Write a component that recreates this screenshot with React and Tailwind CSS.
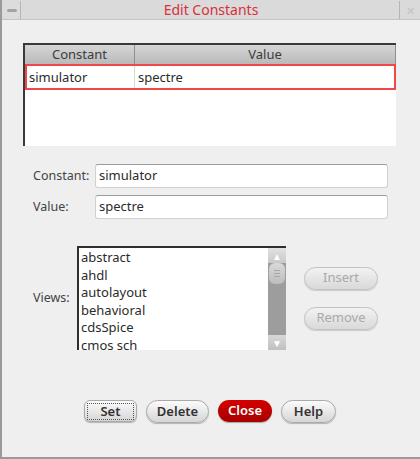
const VIEWS = ['abstract', 'ahdl', 'autolayout', 'behavioral', 'cdsSpice', 'cmos sch']

function PillButton({ children, className = '' }) {
  return (
    <button
      className={'h-[23px] rounded-full border border-[#a9a9a9] bg-gradient-to-b from-[#fbfbfb] to-[#d6d6d6] text-[13px] font-semibold text-[#333] shadow-[0_1px_1px_rgba(0,0,0,0.25)] ' + className}
    >
      {children}
    </button>
  )
}

export default function App() {
  return (
    <div className="w-[420px] h-[459px] flex flex-col bg-[#efefef] border-l-2 border-b-2 border-[#9a9a9a] font-['Noto_Sans',sans-serif] text-[#2b2b2b]">

      {/* title bar */}
      <div className="h-[20px] flex items-stretch bg-[#dadada] border-b border-[#c4c4c4] gap-[2px] pt-[1px]">
        <div className="w-[18px] ml-[1px] flex items-center justify-center bg-[#dcdcdc] border-r border-[#b5b5b5]">
          <div className="w-[10px] h-[3px] rounded-sm bg-[#a3a3a3]" />
        </div>
        <div className="flex-1 flex items-center justify-center border-r border-[#b5b5b5] text-[14px] text-[#d8303a] leading-none">
          Edit Constants
        </div>
        <div className="w-[17px] mr-[1px] flex items-center justify-center text-[11px] text-[#c2c2c2] leading-none">
          ✕
        </div>
      </div>

      {/* table */}
      <div className="ml-[21px] mt-[23px] w-[373px] h-[103px] flex flex-col bg-white border-l-2 border-t-2 border-[#3a3a3a]">
        <div className="h-[19px] flex bg-gradient-to-b from-[#d6d6d6] to-[#b9b9b9] text-[13px] text-[#3c3c3c] leading-none">
          <div className="w-[110px] flex items-center justify-center border-r border-[#8f8f8f]">Constant</div>
          <div className="flex-1 flex items-center justify-center border-r border-[#8f8f8f]">Value</div>
        </div>
        <div className="h-[26px] flex border-2 border-[#f04848] text-[13px] leading-none">
          <div className="w-[108px] flex items-center pl-[2px] border-r border-[#d8d8d8]">simulator</div>
          <div className="flex-1 flex items-center pl-[3px]">spectre</div>
        </div>
      </div>

      {/* fields */}
      <div className="mt-[18px] flex flex-col gap-[7px] text-[13px]">
        <div className="flex items-center">
          <span className="w-[62px] ml-[31px] text-[12.5px] text-[#444]">Constant:</span>
          <div className="w-[293px] h-[24px] flex items-center pl-[3px] bg-white rounded-[3px] border border-[#d0d0d0] border-t-[#9c9c9c]">simulator</div>
        </div>
        <div className="flex items-center">
          <span className="w-[62px] ml-[31px] text-[12.5px] text-[#444]">Value:</span>
          <div className="w-[293px] h-[24px] flex items-center pl-[3px] bg-white rounded-[3px] border border-[#d0d0d0] border-t-[#9c9c9c]">spectre</div>
        </div>
      </div>

      {/* views */}
      <div className="mt-[27px] flex items-center">
        <span className="w-[44px] ml-[31px] text-[12.5px] text-[#444]">Views:</span>
        <div className="w-[209px] h-[104px] flex bg-white border-l-2 border-t-2 border-[#2e2e2e] overflow-hidden">
          <div className="flex-1 flex flex-col pl-[2px] pt-[1px] text-[13px] leading-[17.5px]">
            {VIEWS.map(v => <span key={v}>{v}</span>)}
          </div>
          <div className="w-[18px] flex flex-col bg-[#9d9d9d]">
            <div className="h-[15px] flex items-center justify-center bg-gradient-to-b from-[#e2e2e2] to-[#c9c9c9] text-[10px] text-white leading-none">▲</div>
            <div className="mx-[1px] h-[21px] rounded-[6px] bg-gradient-to-b from-[#d9d9d9] to-[#bdbdbd] flex flex-col items-center justify-center gap-[2px]">
              <div className="w-[6px] h-[1px] bg-[#a8a8a8]" />
              <div className="w-[6px] h-[1px] bg-[#a8a8a8]" />
              <div className="w-[6px] h-[1px] bg-[#a8a8a8]" />
            </div>
            <div className="flex-1" />
            <div className="h-[15px] flex items-center justify-center bg-gradient-to-b from-[#d8d8d8] to-[#c0c0c0] text-[10px] text-white leading-none">▼</div>
          </div>
        </div>
        <div className="ml-[18px] flex flex-col gap-[17px]">
          <button className="w-[74px] h-[23px] rounded-full border border-[#c2c2c2] bg-gradient-to-b from-[#f2f2f2] to-[#d9d9d9] text-[13px] text-[#a9a9a9] shadow-[0_1px_1px_rgba(0,0,0,0.15)]">Insert</button>
          <button className="w-[74px] h-[23px] rounded-full border border-[#c2c2c2] bg-gradient-to-b from-[#f2f2f2] to-[#d9d9d9] text-[13px] text-[#a9a9a9] shadow-[0_1px_1px_rgba(0,0,0,0.15)]">Remove</button>
        </div>
      </div>

      {/* bottom buttons */}
      <div className="mt-[50px] flex justify-center gap-[9px] pr-[2px]">
        <button className="w-[53px] h-[22px] rounded-[6px] border border-[#a9a9a9] bg-gradient-to-b from-[#fbfbfb] to-[#d6d6d6] text-[13px] font-semibold text-[#333] shadow-[0_1px_1px_rgba(0,0,0,0.25)] flex items-center justify-center">
          <span className="w-[47px] h-[17px] border border-dotted border-[#555] flex items-center justify-center leading-none">Set</span>
        </button>
        <PillButton className="w-[63px] h-[22px]">Delete</PillButton>
        <button className="w-[54px] h-[22px] rounded-full bg-gradient-to-b from-[#d40000] to-[#a80000] text-[13px] font-semibold text-white shadow-[0_1px_1px_rgba(0,0,0,0.3)]">Close</button>
        <PillButton className="w-[55px] h-[22px]">Help</PillButton>
      </div>
    </div>
  )
}
